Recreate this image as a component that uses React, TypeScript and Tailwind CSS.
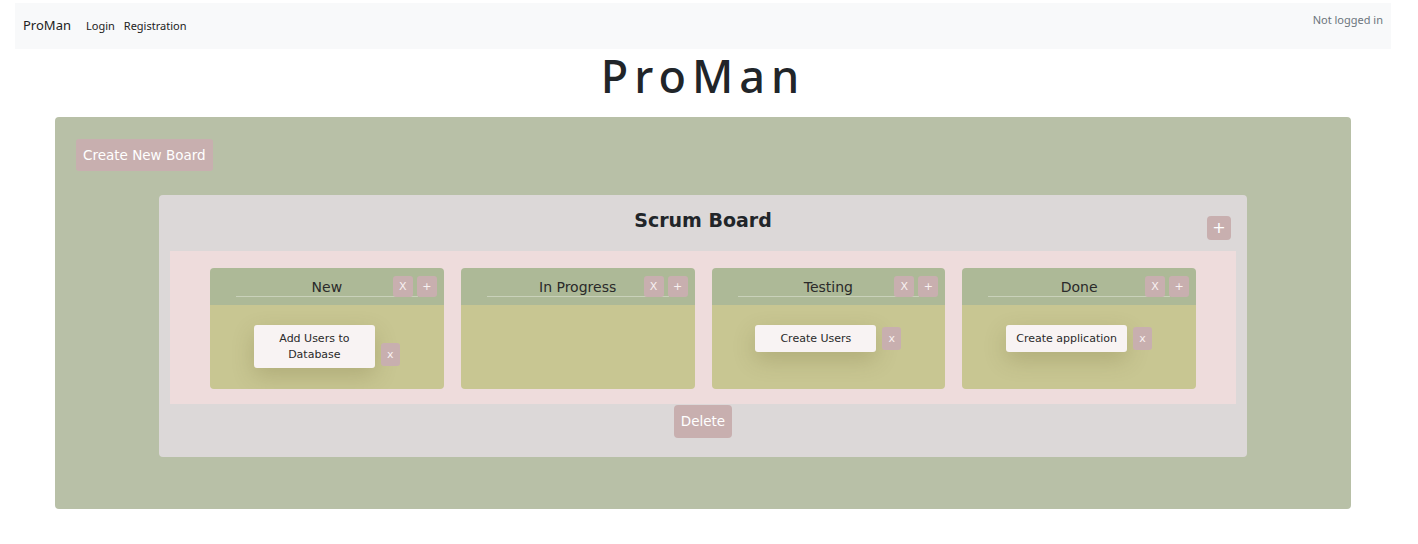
import React from 'react'

type Column = {
  title: string
  cards: string[]
}

const columns: Column[] = [
  { title: 'New', cards: ['Add Users to Database'] },
  { title: 'In Progress', cards: [] },
  { title: 'Testing', cards: ['Create Users'] },
  { title: 'Done', cards: ['Create application'] },
]

const dv = { fontFamily: '"DejaVu Sans", Verdana, sans-serif' }
const nav = { fontFamily: '"Noto Sans", "Open Sans", sans-serif' }

const SmallButton = ({ label }: { label: string }) => (
  <button className="w-[20px] h-[21px] rounded-[3px] bg-[#c8afaf] text-[11px] leading-none text-[#f8f1f1] flex items-center justify-center">
    {label}
  </button>
)

const BoardColumn = ({ column }: { column: Column }) => (
  <div className="relative h-[121px] rounded-[4px] overflow-hidden flex flex-col">
    <div className="h-[37px] bg-[#adb997] pt-[10px]">
      <div className="mx-[26px] border-b border-[#c9d1ba] text-center text-[14px] leading-[18px] text-[#2a2a2a]">
        {column.title}
      </div>
    </div>
    <div className="absolute top-[8px] right-[7px] flex gap-[4px]">
      <SmallButton label="X" />
      <SmallButton label="+" />
    </div>
    <div className="flex-1 bg-[#c8c692] pt-[20px] text-center">
      {column.cards.map((card) => (
        <div key={card} className="whitespace-nowrap">
          <div className="inline-block w-[121px] whitespace-normal align-baseline rounded-[3px] bg-[#f8f3f3] pt-[6px] pb-[5px] px-[10px] text-[11px] leading-[16px] text-[#2a2a2a] shadow-[0_8px_22px_rgba(90,80,30,0.22)]">
            {card}
          </div>
          <button className="inline-block align-baseline ml-[6px] w-[19px] h-[23px] rounded-[3px] bg-[#c8afaf] text-[11px] leading-[23px] text-[#f8f1f1]">
            x
          </button>
        </div>
      ))}
    </div>
  </div>
)

export default function App() {
  return (
    <div className="w-[1406px] bg-white pb-[35px]" style={dv}>
      <nav
        className="mx-[15px] mt-[3px] h-[46px] bg-[#f8f9fa] flex items-start justify-between px-[8px]"
        style={nav}
      >
        <div className="flex items-center h-[46px]">
          <span className="text-[13px] text-[#222]">ProMan</span>
          <span className="ml-[15px] text-[11px] text-[#222]">Login</span>
          <span className="ml-[9px] text-[11px] text-[#222]">Registration</span>
        </div>
        <span className="mt-[9px] text-[11px] text-[#6c757d]">Not logged in</span>
      </nav>

      <h1
        className="h-[68px] pb-[14px] flex items-center justify-center text-[45px] font-medium tracking-[6px] text-[#212529]"
        style={nav}
      >
        ProMan
      </h1>

      <div className="mx-[55px] h-[392px] rounded-[4px] bg-[#b8c0a7] pt-[22px]">
        <button className="ml-[21px] h-[32px] px-[7px] rounded-[3px] bg-[#c8afaf] text-[13.5px] text-white">
          Create New Board
        </button>

        <div className="relative mx-[104px] mt-[24px] rounded-[4px] bg-[#dcd8d8] pt-[13px] pb-[19px]">
          <h2 className="text-center text-[19px] leading-[24px] font-bold text-[#212529]">
            Scrum Board
          </h2>
          <button className="absolute top-[21px] right-[16px] w-[24px] h-[24px] rounded-[4px] bg-[#c8afaf] text-[16px] leading-none text-white">
            +
          </button>

          <div className="mx-[11px] mt-[19px] bg-[#eedcdc] px-[40px] pt-[17px] pb-[15px] grid grid-cols-4 gap-[17px]">
            {columns.map((column) => (
              <BoardColumn key={column.title} column={column} />
            ))}
          </div>

          <div className="flex justify-center mt-[1px]">
            <button className="h-[33px] px-[7px] rounded-[4px] bg-[#c8afaf] text-[13.5px] text-white">
              Delete
            </button>
          </div>
        </div>
      </div>
    </div>
  )
}
